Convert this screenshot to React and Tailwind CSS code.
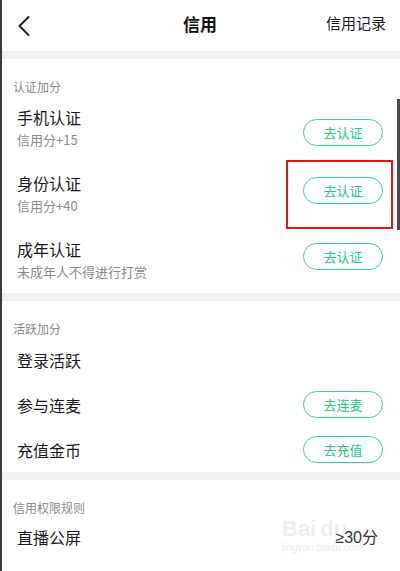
import React from "react";

const font = { fontFamily: '"Noto Sans CJK SC", "Noto Sans", sans-serif' };

function Btn({ children, className = "" }) {
  return (
    <div
      className={`w-[80px] h-[27px] rounded-full border-[1.5px] border-[#2fd393] text-[#22c985] text-[13px] flex items-center justify-center ${className}`}
    >
      {children}
    </div>
  );
}

function Bar() {
  return <div className="h-[8px] bg-[#f1f1f1]" />;
}

function Label({ children }) {
  return (
    <div className="pt-[20px] pl-[13px] text-[12px] leading-[16px] text-[#8a8a8a]">
      {children}
    </div>
  );
}

function Row2({ title, sub, btnMt }) {
  return (
    <div className="h-[66px] flex items-start justify-between pl-[17px] pr-[17px]">
      <div className="pt-[11px] flex flex-col">
        <div className="text-[16px] leading-[22px] text-[#1a1a1a]">{title}</div>
        <div className="mt-[3px] text-[13px] leading-[18px] text-[#8a8a8a]">{sub}</div>
      </div>
      <Btn className={btnMt}>去认证</Btn>
    </div>
  );
}

function Row1({ title, btn, right, h = "h-[45px]" }) {
  return (
    <div className={`${h} flex items-center justify-between pl-[17px] pr-[17px]`}>
      <div className="text-[16px] leading-[22px] text-[#1a1a1a]">{title}</div>
      {btn && <Btn>{btn}</Btn>}
      {right && (
        <div className="relative z-10 pr-[5px] text-[16px] leading-[22px] text-[#333]">
          <span style={{ fontFamily: '"Liberation Sans", sans-serif' }}>≥30</span>分
        </div>
      )}
    </div>
  );
}

export default function App() {
  return (
    <div className="relative w-[400px] h-[571px] overflow-hidden bg-white" style={font}>
      <div className="absolute left-0 top-0 w-[2px] h-full bg-[#3a3a3a]" />
      <div className="absolute right-0 top-[99px] w-[3px] h-[131px] bg-[#4a4a4a]" />

      {/* header */}
      <div className="h-[51px] flex items-center justify-between pl-[16px] pr-[14px]">
        <svg width="14" height="22" viewBox="0 0 14 22" className="ml-[1px]">
          <polyline points="11.5,2 2.5,11 11.5,20" fill="none" stroke="#222" strokeWidth="2" strokeLinecap="round" strokeLinejoin="round" />
        </svg>
        <div className="absolute left-0 right-0 top-0 h-[51px] flex items-center justify-center pointer-events-none">
          <span className="text-[17px] font-bold text-[#111] -mt-[4px]">信用</span>
        </div>
        <div className="text-[15px] text-[#1a1a1a] -mt-[4px]">信用记录</div>
      </div>
      <Bar />

      <Label>认证加分</Label>
      <Row2 title="手机认证" sub="信用分+15" btnMt="mt-[24px]" />
      <Row2 title="身份认证" sub="信用分+40" btnMt="mt-[16px]" />
      <Row2 title="成年认证" sub="未成年人不得进行打赏" btnMt="mt-[16px]" />
      <Bar />

      <Label>活跃加分</Label>
      <Row1 title="登录活跃" />
      <Row1 title="参与连麦" btn="去连麦" />
      <Row1 title="充值金币" btn="去充值" />
      <Bar />

      <Label>信用权限规则</Label>
      <Row1 title="直播公屏" right h="h-[42px]" />

      {/* annotation box */}
      <div className="absolute left-[286px] top-[160px] w-[107px] h-[69px] border-2 border-[#e5141c]" />

      {/* watermark */}
      <div className="absolute left-[282px] top-[516px] flex flex-col items-start pointer-events-none" style={{ fontFamily: '"Liberation Sans", sans-serif' }}>
        <div className="text-[22px] leading-[26px] font-bold text-[#efefef]">Bai<span className="ml-[4px]">du</span></div>
        <div className="text-[10px] leading-[12px] text-[#ececec]">jingyan.baidu.com</div>
      </div>
    </div>
  );
}
